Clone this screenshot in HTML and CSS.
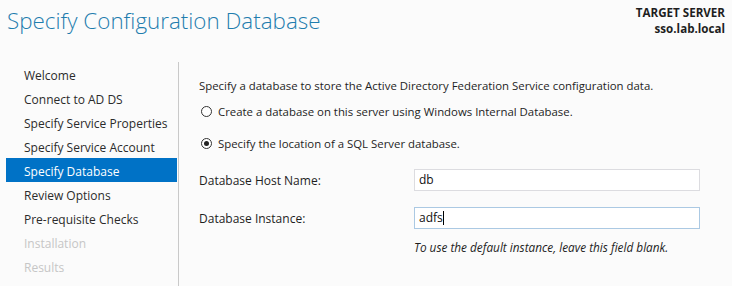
FILE: index.html
```html
<!DOCTYPE html>
<html lang="en">
<head>
    <meta charset="UTF-8">
    <title>Specify Configuration Database</title>
    <link rel="stylesheet" href="styles.css">
</head>
<body>
    <!-- Header -->
    <div class="header">
        <h1>Specify Configuration Database</h1>
        <div class="target">
            <div class="target-label">TARGET SERVER</div>
            <div class="target-name">sso.lab.local</div>
        </div>
    </div>

    <div class="wizard">
        <!-- Steps -->
        <ul class="steps">
            <li>Welcome</li>
            <li>Connect to AD DS</li>
            <li>Specify Service Properties</li>
            <li>Specify Service Account</li>
            <li class="active">Specify Database</li>
            <li>Review Options</li>
            <li>Pre-requisite Checks</li>
            <li class="disabled">Installation</li>
            <li class="disabled">Results</li>
        </ul>

        <!-- Page content -->
        <div class="content">
            <p class="intro">Specify a database to store the Active Directory Federation Service configuration data.</p>
            <label class="radio-row first">
                <input type="radio" name="dbtype">
                <span>Create a database on this server using Windows Internal Database.</span>
            </label>
            <label class="radio-row">
                <input type="radio" name="dbtype" checked>
                <span>Specify the location of a SQL Server database.</span>
            </label>

            <div class="form-row first">
                <span class="field-label">Database Host Name:</span>
                <div class="field">db</div>
            </div>
            <div class="form-row">
                <span class="field-label">Database Instance:</span>
                <div class="field focused">adfs<span class="caret"></span></div>
            </div>
            <div class="hint">To use the default instance, leave this field blank.</div>
        </div>
    </div>
</body>
</html>
```

FILE: styles.css
```css
/* General */
body {
    margin: 0;
    background-color: #fbfbfb;
    font-family: 'Segoe UI', 'Open Sans', 'Liberation Sans', sans-serif;
    font-size: 12px;
    color: #1e1e1e;
    width: 732px;
    height: 286px;
    overflow: hidden;
}

/* Header */
.header {
    display: flex;
    justify-content: space-between;
    height: 62px;
}

.header h1 {
    margin: 5px 0 0 7px;
    font-size: 22.4px;
    font-weight: 300;
    color: #1f7dae;
    line-height: 32px;
}

.target {
    text-align: right;
    padding: 5px 7px 0 0;
    font-size: 11.6px;
    line-height: 16px;
}

.target-label {
    font-weight: bold;
}

.target-name {
    font-weight: bold;
}

/* Wizard layout */
.wizard {
    display: flex;
    height: 224px;
}

.steps {
    list-style: none;
    margin: 0;
    padding: 0 0 0 6px;
    width: 172px;
    border-right: 1px solid #c9c9c9;
}

.steps li {
    height: 22px;
    line-height: 24px;
    padding: 2px 0 0 18px;
    margin-right: 1px;
    color: #2b2b2b;
    white-space: nowrap;
}

.steps li.active {
    background-color: #0072c6;
    color: #ffffff;
}

.steps li.disabled {
    color: #c6c6c6;
}

.content {
    padding: 16px 0 0 20px;
    flex: 1;
}

.intro {
    margin: 0;
    font-size: 11.4px;
    line-height: 16px;
}

/* Radios */
.radio-row {
    display: flex;
    align-items: center;
    height: 16px;
    margin-top: 16px;
    font-size: 11.4px;
}

.radio-row.first {
    margin-top: 9px;
}

.radio-row input {
    appearance: none;
    -webkit-appearance: none;
    width: 11px;
    height: 11px;
    margin: 0 6px 0 2px;
    border: 1px solid #333;
    border-radius: 50%;
    background: #fff;
    position: relative;
}

.radio-row input:checked::after {
    content: "";
    position: absolute;
    left: 2px;
    top: 2px;
    width: 5px;
    height: 5px;
    border-radius: 50%;
    background: #222;
}

/* Fields */
.form-row {
    display: flex;
    align-items: center;
    margin-top: 16px;
}

.form-row.first {
    margin-top: 18px;
}

.field-label {
    width: 215px;
}

.field {
    width: 280px;
    height: 20px;
    line-height: 20px;
    padding-left: 4px;
    border: 1px solid #dcdce0;
    background: #ffffff;
    color: #111;
}

.field.focused {
    border-color: #abc9e3;
}

.caret {
    display: inline-block;
    width: 1px;
    height: 14px;
    background: #000;
    vertical-align: -3px;
}

.hint {
    margin: 10px 0 0 215px;
    font-size: 11.8px;
    font-style: italic;
    line-height: 16px;
    color: #1e1e1e;
}
```
